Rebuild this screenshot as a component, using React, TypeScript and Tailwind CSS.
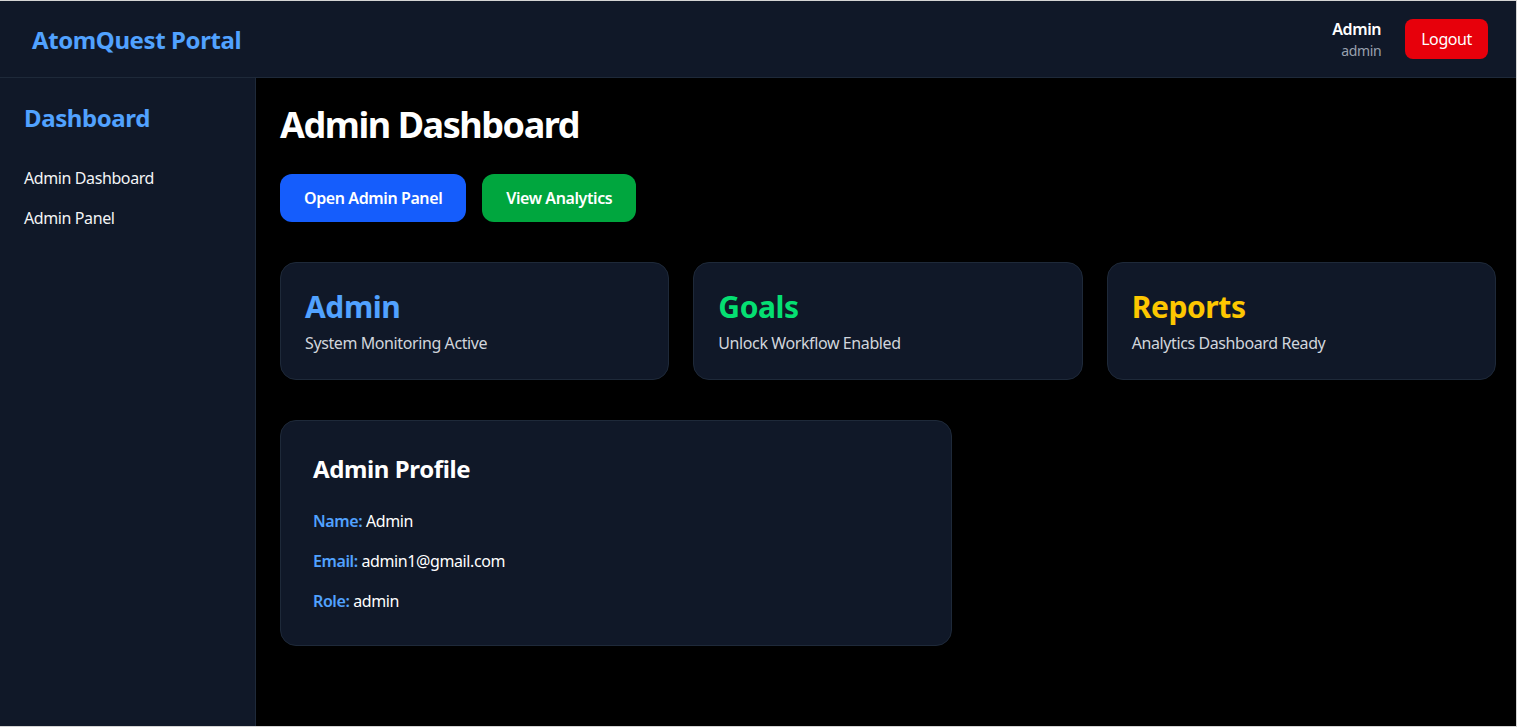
import type { ReactNode } from "react";

type Stat = {
	title: string;
	desc: string;
	color: string;
};

const stats: Stat[] = [
	{ title: "Admin", desc: "System Monitoring Active", color: "text-blue-400" },
	{ title: "Goals", desc: "Unlock Workflow Enabled", color: "text-green-400" },
	{ title: "Reports", desc: "Analytics Dashboard Ready", color: "text-yellow-400" },
];

const navItems = ["Admin Dashboard", "Admin Panel"];

function ProfileRow({ label, children }: { label: string; children: ReactNode }) {
	return (
		<p className="text-white">
			<span className="font-semibold text-blue-400">{label}:</span> {children}
		</p>
	);
}

export default function App() {
	return (
		<div className="h-screen flex flex-col overflow-hidden bg-black text-white tracking-tight font-['Noto_Sans',sans-serif] border-t border-r border-b border-[#d4d4d4]">
			<header className="flex items-center justify-between pl-8 pr-7 py-4 bg-gray-900 border-b border-gray-800">
				<h1 className="pt-0.5 text-2xl font-bold text-blue-400">AtomQuest Portal</h1>
				<div className="flex items-center gap-6">
					<div className="text-right">
						<p className="font-semibold text-white">Admin</p>
						<p className="text-sm text-gray-400">admin</p>
					</div>
					<button className="px-4 py-2 text-white bg-red-600 rounded-lg">Logout</button>
				</div>
			</header>

			<div className="flex flex-1">
				<aside className="w-64 p-6 bg-gray-900 border-r border-gray-800 shrink-0">
					<h2 className="mb-6 text-2xl font-bold text-blue-400">Dashboard</h2>
					<nav>
						{navItems.map((item) => (
							<a key={item} href="#" className="block py-2 text-gray-100">
								{item}
							</a>
						))}
					</nav>
				</aside>

				<main className="flex-1 py-6 pl-6 pr-5">
					<h1 className="pt-[3px] mb-[29px] text-4xl font-bold tracking-[-0.04em]">Admin Dashboard</h1>

					<div className="flex gap-4 mb-10">
						<button className="px-6 py-3 font-semibold text-white bg-blue-600 rounded-xl">
							Open Admin Panel
						</button>
						<button className="px-6 py-3 font-semibold text-white bg-green-600 rounded-xl">
							View Analytics
						</button>
					</div>

					<div className="grid grid-cols-3 gap-6 mb-10">
						{stats.map((s) => (
							<div key={s.title} className="p-6 bg-gray-900 border border-gray-800 rounded-2xl">
								<h3 className={`pt-0.5 text-3xl font-bold ${s.color}`}>{s.title}</h3>
								<p className="mt-1.5 text-gray-300">{s.desc}</p>
							</div>
						))}
					</div>

					<div className="max-w-2xl p-8 bg-gray-900 border border-gray-800 rounded-2xl">
						<h2 className="mb-6 text-2xl font-bold">Admin Profile</h2>
						<div className="space-y-4">
							<ProfileRow label="Name">Admin</ProfileRow>
							<ProfileRow label="Email">admin1@gmail.com</ProfileRow>
							<ProfileRow label="Role">admin</ProfileRow>
						</div>
					</div>
				</main>
			</div>
		</div>
	);
}
